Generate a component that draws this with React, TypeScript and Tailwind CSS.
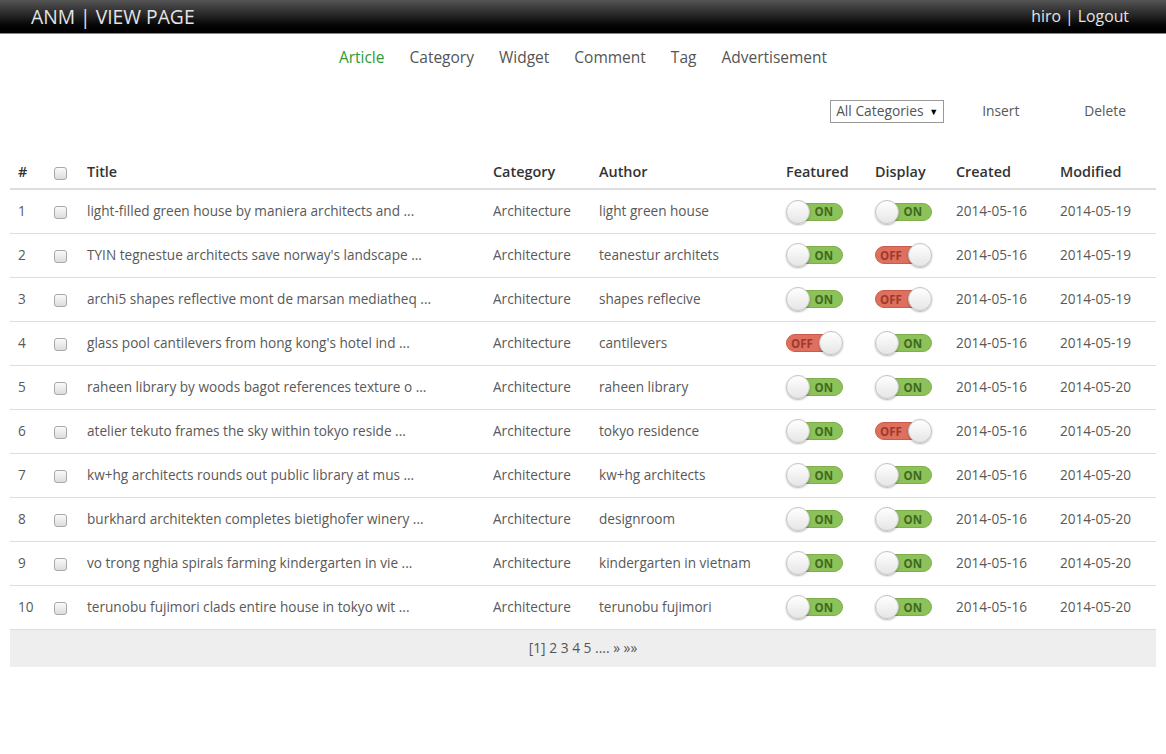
import React from "react";

type Row = {
  id: number;
  title: string;
  author: string;
  featured: boolean;
  display: boolean;
  created: string;
  modified: string;
};

const rows: Row[] = [
  { id: 1, title: "light-filled green house by maniera architects and ...", author: "light green house", featured: true, display: true, created: "2014-05-16", modified: "2014-05-19" },
  { id: 2, title: "TYIN tegnestue architects save norway's landscape ...", author: "teanestur architets", featured: true, display: false, created: "2014-05-16", modified: "2014-05-19" },
  { id: 3, title: "archi5 shapes reflective mont de marsan mediatheq ...", author: "shapes reflecive", featured: true, display: false, created: "2014-05-16", modified: "2014-05-19" },
  { id: 4, title: "glass pool cantilevers from hong kong's hotel ind ...", author: "cantilevers", featured: false, display: true, created: "2014-05-16", modified: "2014-05-19" },
  { id: 5, title: "raheen library by woods bagot references texture o ...", author: "raheen library", featured: true, display: true, created: "2014-05-16", modified: "2014-05-20" },
  { id: 6, title: "atelier tekuto frames the sky within tokyo reside ...", author: "tokyo residence", featured: true, display: false, created: "2014-05-16", modified: "2014-05-20" },
  { id: 7, title: "kw+hg architects rounds out public library at mus ...", author: "kw+hg architects", featured: true, display: true, created: "2014-05-16", modified: "2014-05-20" },
  { id: 8, title: "burkhard architekten completes bietighofer winery ...", author: "designroom", featured: true, display: true, created: "2014-05-16", modified: "2014-05-20" },
  { id: 9, title: "vo trong nghia spirals farming kindergarten in vie ...", author: "kindergarten in vietnam", featured: true, display: true, created: "2014-05-16", modified: "2014-05-20" },
  { id: 10, title: "terunobu fujimori clads entire house in tokyo wit ...", author: "terunobu fujimori", featured: true, display: true, created: "2014-05-16", modified: "2014-05-20" },
];

const navItems = ["Article", "Category", "Widget", "Comment", "Tag", "Advertisement"];

const Toggle = ({ on }: { on: boolean }) => {
  const knob = (
    <span className="absolute top-1/2 -translate-y-1/2 w-[24px] h-[24px] rounded-full border border-[#c4c4c4] bg-gradient-to-b from-white to-[#e6e6e6] shadow-[0_1px_2px_rgba(0,0,0,0.3)]" style={on ? { left: 0 } : { right: 0 }} />
  );
  return (
    <div className="relative w-[57px] h-[24px] flex items-center">
      {on ? (
        <div className="ml-[4px] w-[53px] h-[18px] rounded-full bg-[#8dc15a] border border-[#7fae4d] flex items-center justify-end pr-[9px]">
          <span className="text-[11.5px] font-bold leading-none text-[#3e6a1f]">ON</span>
        </div>
      ) : (
        <div className="w-[53px] h-[18px] rounded-full bg-[#df6f5f] border border-[#c95e4e] flex items-center justify-start pl-[4px]">
          <span className="text-[11.5px] font-bold leading-none text-[#9c3a2c]">OFF</span>
        </div>
      )}
      {knob}
    </div>
  );
};

const Check = () => (
  <span className="block w-[13px] h-[13px] rounded-[3px] border border-[#a9a9a9] bg-gradient-to-b from-[#fafafa] to-[#dcdcdc]" />
);

export default function App() {
  return (
    <div className="min-h-[754px] bg-white text-[#595959] font-['Open_Sans',sans-serif]">
      <header className="h-[34px] bg-gradient-to-b from-[#555] via-[#222] to-black border-b border-[#8a8a8a] flex items-center justify-between pl-[31px] pr-[37px]">
        <div className="text-[19.3px] text-[#e4e4e4] pt-[1px]">ANM | VIEW PAGE</div>
        <div className="text-[15.8px] text-[#e4e4e4]">hiro | Logout</div>
      </header>

      <nav className="flex justify-center gap-[25px] pt-[12px] text-[15.5px]">
        {navItems.map((n, i) => (
          <span key={n} className={i === 0 ? "text-[#2f9a35]" : "text-[#555]"}>
            {n}
          </span>
        ))}
      </nav>

      <div className="flex justify-end items-center mt-[31px] pr-[40px] text-[13.8px]">
        <div className="w-[114px] h-[23px] border border-[#999] flex items-center justify-between px-[5px] text-[#555]">
          <span>All Categories</span>
          <span className="text-[9px] text-black">▼</span>
        </div>
        <span className="ml-[38px]">Insert</span>
        <span className="ml-[65px]">Delete</span>
      </div>

      <div className="mx-[10px] mt-[28px]">
        <table className="w-full border-collapse text-[13.6px]">
          <thead>
            <tr className="border-b-2 border-[#ddd] h-[38px] text-[14.4px] text-[#333] font-semibold">
              <th className="text-left font-semibold w-[36px] pl-[8px] pt-[4px]">#</th>
              <th className="text-left w-[41px] pt-[4px]"><span className="ml-[8px] inline-block align-middle"><Check /></span></th>
              <th className="text-left font-semibold w-[406px] pt-[4px]">Title</th>
              <th className="text-left font-semibold w-[106px] pt-[4px]">Category</th>
              <th className="text-left font-semibold w-[187px] pt-[4px]">Author</th>
              <th className="text-left font-semibold w-[89px] pt-[4px]">Featured</th>
              <th className="text-left font-semibold w-[81px] pt-[4px]">Display</th>
              <th className="text-left font-semibold w-[104px] pt-[4px]">Created</th>
              <th className="text-left font-semibold pt-[4px]">Modified</th>
            </tr>
          </thead>
          <tbody>
            {rows.map((r) => (
              <tr key={r.id} className="h-[44px] border-b border-[#ddd]">
                <td className="pl-[8px]">{r.id}</td>
                <td><span className="ml-[8px] inline-block align-middle"><Check /></span></td>
                <td className="whitespace-nowrap">{r.title}</td>
                <td>Architecture</td>
                <td>{r.author}</td>
                <td><Toggle on={r.featured} /></td>
                <td><Toggle on={r.display} /></td>
                <td>{r.created}</td>
                <td>{r.modified}</td>
              </tr>
            ))}
          </tbody>
        </table>
        <div className="h-[37px] bg-[#eee] flex items-center justify-center text-[13.8px] text-[#555]">
          [1] 2 3 4 5 .... » »»
        </div>
      </div>
    </div>
  );
}
